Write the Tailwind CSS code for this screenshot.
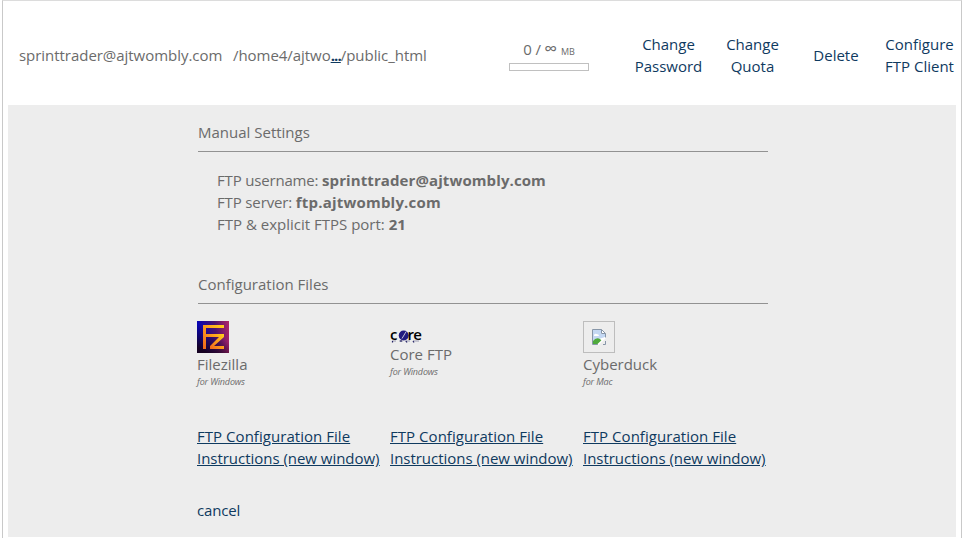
<!DOCTYPE html>
<html lang="en">
<head>
<meta charset="utf-8">
<title>FTP Accounts</title>
<script src="https://cdn.jsdelivr.net/npm/@tailwindcss/browser@4"></script>
</head>
<body class="bg-white overflow-hidden">
<div class="ml-[2px] w-[960px] h-[538px] border-x border-t border-[#c9c9c9] border-t-[#dcdcdc] px-[5px] font-['Open_Sans','Noto_Sans',sans-serif] text-[15px] leading-[22px] text-[#6b6b6b] whitespace-nowrap overflow-hidden">
  <header class="h-[104px] flex items-center pt-[4px]">
    <div class="w-[214px] pl-[11px] tracking-[-0.04px]">sprinttrader@ajtwombly.com</div>
    <div class="w-[255px] pl-[11px] tracking-[-0.05px]">/home4/ajtwo<a class="underline font-bold tracking-[-0.9px] text-[#0f3a5f]">...</a>/public_html</div>
    <div class="w-[144px] pl-[32px]">
      <div class="w-[80px] text-center">0 / <span class="inline-block w-[13px] text-[18px] leading-none -ml-px">∞</span> <span class="text-[9px]">MB</span></div>
      <div class="w-[80px] h-[8px] mb-[2px] border border-[#c0c0c0] bg-white"></div>
    </div>
    <a class="w-[95px] text-center text-[#0f3a5f]">Change<br>Password</a>
    <a class="w-[73px] text-center text-[#0f3a5f]">Change<br>Quota</a>
    <a class="w-[94px] text-center text-[#0f3a5f]">Delete</a>
    <a class="w-[73px] text-center text-[#0f3a5f]">Configure<br>FTP Client</a>
  </header>
  <main class="h-[432px] bg-[#ededed] pl-[189px] pt-[16px]">
    <section class="w-[571px]">
      <h2 class="pl-px h-[30px]">Manual Settings</h2>
      <div class="ml-px h-px bg-[#929292]"></div>
      <div class="pl-[20px] pt-[17px] h-[121px]">
        <p><span class="tracking-[-0.18px]">FTP username: </span><b class="tracking-[0.1px]">sprinttrader@ajtwombly.com</b></p>
        <p><span class="tracking-[-0.14px]">FTP server: </span><b class="tracking-[0.2px]">ftp.ajtwombly.com</b></p>
        <p>FTP &amp; explicit FTPS port: <b>21</b></p>
      </div>
      <h2 class="pl-px h-[30px]">Configuration Files</h2>
      <div class="ml-px h-px bg-[#929292]"></div>
    </section>
    <section class="grid grid-cols-[193px_193px_193px] grid-rows-[104px_44px] content-start pt-[17px] h-[195px]">
      <div>
        <svg class="block w-8 h-8" viewBox="0 0 32 32">
          <defs>
            <linearGradient id="bg" x1="0" x2="1" y1="0.1" y2="0"><stop offset="0" stop-color="#0505b8"/><stop offset="0.55" stop-color="#4a126c"/><stop offset="1" stop-color="#b02468"/></linearGradient>
            <linearGradient id="shade" x1="0.9" y1="0" x2="0.3" y2="1"><stop offset="0.45" stop-color="#180010" stop-opacity="0"/><stop offset="1" stop-color="#180008" stop-opacity="0.85"/></linearGradient>
            <linearGradient id="fz" x1="0" y1="1" x2="1" y2="0"><stop offset="0" stop-color="#f0641c"/><stop offset="0.6" stop-color="#ffa51c"/><stop offset="1" stop-color="#ffd21c"/></linearGradient>
          </defs>
          <rect width="32" height="32" fill="url(#bg)"/><rect width="32" height="32" fill="url(#shade)"/>
          <g fill="url(#fz)"><path d="M6 4H27V7H9V13H14V16H9V28H6Z"/><path d="M13 13H27V16L17 25H27V28H13V25L22 16H13Z"/></g>
        </svg>
        <div>Filezilla</div>
        <div class="text-[9px] leading-[14px] italic tracking-[-0.15px]">for Windows</div>
      </div>
      <div>
        <div class="relative w-8 h-[22px]">
          <svg class="block w-8 h-[22px]" viewBox="0 0 32 22" fill="none">
            <circle cx="13.7" cy="14.5" r="5" fill="#211b80"/>
            <path d="M12 17.5L16.2 10.5" stroke="#ededed" stroke-width="0.8"/>
            <path d="M2 20H6M9 20H13M15 20H20M23 20H29" stroke="#77769a" stroke-width="0.7"/>
            <path d="M2.5 20v1.5M11 19v2M16 20l1 1.5M23 20l1 1.5" stroke="#222064" stroke-width="1.2"/>
          </svg>
          <span class="absolute left-0 top-[4px] text-[15px] leading-[18px] font-semibold text-black">c</span>
          <span class="absolute left-[17.5px] top-[4px] text-[15px] leading-[18px] font-semibold text-black tracking-[-0.7px]">re</span>
        </div>
        <div>Core FTP</div>
        <div class="text-[9px] leading-[14px] italic tracking-[-0.15px]">for Windows</div>
      </div>
      <div>
        <div class="w-8 h-8 border border-[#bdbdbd] flex items-center justify-center">
          <svg class="w-4 h-4" viewBox="0 0 16 16" fill="none">
            <path d="M1.5.5H10.5L14.5 4.5V15.5H1.5Z" fill="#fff"/>
            <path d="M2 1H10V5H14V8L2 12Z" fill="#c4d8f3"/>
            <path d="M3 6Q4 4 5.5 5Q8 5 8 7H3Z" fill="#fff"/>
            <path d="M2 15V12Q5 8 9 10L11 12L8 15Z" fill="#4faa3c"/>
            <path d="M7 16L15 8V16Z" fill="#ededed"/>
            <path d="M7 15.5H1.5V.5H10.5L14.5 4.5V9M10.5.5V4.5H14.5M12 15.5H14.5V12" stroke="#8796a8"/>
            <path d="M7 15.5L14.5 8.5" stroke="#fff" stroke-width="1.5"/>
          </svg>
        </div>
        <div>Cyberduck</div>
        <div class="text-[9px] leading-[14px] italic tracking-[-0.15px]">for Mac</div>
      </div>
      <div class="flex flex-col items-start text-[#0f3a5f] underline"><a class="tracking-[0.04px]">FTP Configuration File</a><a class="tracking-[-0.03px]">Instructions (new window)</a></div>
      <div class="flex flex-col items-start text-[#0f3a5f] underline"><a class="tracking-[0.04px]">FTP Configuration File</a><a class="tracking-[-0.03px]">Instructions (new window)</a></div>
      <div class="flex flex-col items-start text-[#0f3a5f] underline"><a class="tracking-[0.04px]">FTP Configuration File</a><a class="tracking-[-0.03px]">Instructions (new window)</a></div>
    </section>
    <a class="text-[#0f3a5f] tracking-[-0.15px]">cancel</a>
  </main>
  <div class="h-px bg-white"></div>
</div>
</body>
</html>
